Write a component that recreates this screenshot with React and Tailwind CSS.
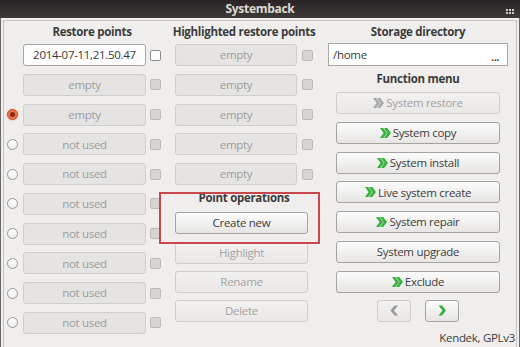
import React from "react";

const FONT = "font-['Open_Sans','DejaVu_Sans',sans-serif] tracking-[-0.3px]";

function Chev({ color = "#35b13d", className = "" }) {
  return (
    <svg width="11" height="10" viewBox="0 0 11 10" className={className}>
      <polygon points="0,0 3.2,0 7,5 3.2,10 0,10 3.6,5" fill={color} />
      <polygon points="4,0 7.2,0 11,5 7.2,10 4,10 7.6,5" fill={color} />
    </svg>
  );
}

function Single({ color, dir }) {
  const pts = dir === "left" ? "8,0 4,5 8,10 4.5,10 0.5,5 4.5,0" : "0.5,0 4.5,5 0.5,10 4,10 8,5 4,0";
  return (
    <svg width="9" height="11" viewBox="0 0 9 10">
      <polygon points={pts} fill={color} />
    </svg>
  );
}

function Field({ text, active = false, w = "w-[123px]" }) {
  return (
    <div
      className={`h-[22px] ${w} rounded-[3px] border flex items-center justify-center text-[11.5px] leading-none ${
        active
          ? "border-[#a9a7a4] bg-[#fdfdfd] text-[#3a3a3a]"
          : "border-[#d0cecb] bg-[#e5e4e2] text-[#9c9c9c]"
      }`}
    >
      {text}
    </div>
  );
}

function Check({ active = false }) {
  return (
    <div
      className={`w-[11px] h-[11px] rounded-[2px] border ${
        active ? "border-[#8e8c89] bg-white" : "border-[#bdbbb8] bg-[#d6d5d3]"
      }`}
    />
  );
}

function Radio({ kind }) {
  if (kind === "none") return <div className="w-[11px] h-[11px]" />;
  if (kind === "on")
    return (
      <div className="w-[11px] h-[11px] rounded-full bg-[#e9744a] border border-[#c4532c] flex items-center justify-center shadow-[0_0_2px_#f0a080]">
        <div className="w-[5px] h-[5px] rounded-full bg-[#8c2a0e]" />
      </div>
    );
  return <div className="w-[11px] h-[11px] rounded-full bg-gradient-to-b from-[#ffffff] to-[#ececec] border border-[#9b9996]" />;
}

function Btn({ children, disabled = false, w = "w-[164px]" }) {
  return (
    <div
      className={`h-[22px] ${w} rounded-[3px] border flex items-center justify-center gap-[2px] text-[11.5px] leading-none ${
        disabled
          ? "border-[#cfcdca] bg-gradient-to-b from-[#f2f1f0] to-[#e9e8e6] text-[#a2a2a2]"
          : "border-[#a6a4a1] bg-gradient-to-b from-[#fcfcfc] to-[#e6e5e3] text-[#3c3c3c]"
      }`}
    >
      {children}
    </div>
  );
}

export default function App() {
  const colA = [
    { r: "none", t: "2014-07-11,21.50.47", a: true },
    { r: "none", t: "empty" },
    { r: "on", t: "empty" },
    { r: "off", t: "not used" },
    { r: "off", t: "not used" },
    { r: "off", t: "not used" },
    { r: "off", t: "not used" },
    { r: "off", t: "not used" },
    { r: "off", t: "not used" },
    { r: "off", t: "not used" },
  ];
  const head = "flex items-center justify-center text-[11.5px] font-bold text-[#3c3c3c] whitespace-nowrap";
  return (
    <div className={`w-[520px] h-[347px] overflow-hidden flex flex-col bg-[#3a3935] ${FONT}`}>
      {/* title bar */}
      <div className="h-[18px] shrink-0 relative flex items-center justify-center bg-gradient-to-b from-[#2a2327] to-[#3d3c38]">
        <span className="text-[12px] font-bold text-[#dedad2] leading-none">Systemback</span>
        <div className="absolute right-[6px] top-[9px] grid grid-cols-3 gap-[1px]">
          {[0, 1, 2, 3, 4, 5].map((i) => (
            <div key={i} className="w-[2px] h-[2px] bg-[#cfcbc3]" />
          ))}
        </div>
      </div>
      {/* body */}
      <div className="flex-1 bg-[#efeeed] border-l border-r border-[#6a6966] pt-[2px] pl-[2px] pr-[2px]">
        <div className="h-full border-l border-t border-r border-[#c6c4c1] pt-[3px] pl-[3px] flex">
          {/* column A */}
          <div className="flex flex-col w-[154px]">
            <div className={`h-[16px] ml-[16px] ${head}`}>Restore points</div>
            <div className="mt-[4px] flex flex-col gap-[7.75px]">
              {colA.map((row, i) => (
                <div key={i} className="flex items-center">
                  <Radio kind={row.r} />
                  <div className="ml-[5px]">
                    <Field text={row.t} active={row.a} />
                  </div>
                  <div className="ml-[4px]">
                    <Check active={row.a} />
                  </div>
                </div>
              ))}
            </div>
          </div>
          {/* column B */}
          <div className="flex flex-col w-[138px] ml-[14px]">
            <div className={`h-[16px] ${head}`}>Highlighted restore points</div>
            <div className="mt-[4px] flex flex-col gap-[7.75px]">
              {[0, 1, 2, 3, 4].map((i) => (
                <div key={i} className="flex items-center">
                  <Field text="empty" w="w-[122px]" />
                  <div className="ml-[5px]">
                    <Check />
                  </div>
                </div>
              ))}
            </div>
            <div className="relative mt-[6px]">
              <div className={`h-[14px] ${head}`}>Point operations</div>
              <div className="mt-[7px]">
                <Btn w="w-[133px]">Create new</Btn>
              </div>
              <div className="absolute top-[1px] -left-[16px] -right-[7px] -bottom-[10px] border-2 border-[#c7474c] pointer-events-none" />
            </div>
            <div className="mt-[8px] flex flex-col gap-[7px]">
              <Btn disabled w="w-[133px]">Highlight</Btn>
              <Btn disabled w="w-[133px]">Rename</Btn>
              <Btn disabled w="w-[133px]">Delete</Btn>
            </div>
          </div>
          {/* column C */}
          <div className="flex flex-col w-[180px] ml-[15px]">
            <div className={`h-[16px] ${head}`}>Storage directory</div>
            <div className="mt-[3px] h-[23px] border border-[#a9a7a4] bg-white flex items-center justify-between pl-[4px] pr-[8px] text-[11.5px] text-[#3a3a3a]">
              <span>/home</span>
              <span className="text-[10px] font-bold leading-none mt-[4px]">...</span>
            </div>
            <div className={`mt-[6px] h-[14px] ${head}`}>Function menu</div>
            <div className="mt-[6px] ml-[8px] flex flex-col gap-[7.75px]">
              <Btn disabled>
                <Chev color="#a9a9a9" /> System restore
              </Btn>
              <Btn>
                <Chev /> System copy
              </Btn>
              <Btn>
                <Chev /> System install
              </Btn>
              <Btn>
                <Chev /> Live system create
              </Btn>
              <Btn>
                <Chev /> System repair
              </Btn>
              <Btn>System upgrade</Btn>
              <Btn>
                <Chev /> Exclude
              </Btn>
            </div>
            <div className="mt-[7px] flex justify-center gap-[14px]">
              <div className="w-[34px] h-[22px] rounded-[3px] border border-[#cfcdca] bg-gradient-to-b from-[#f3f2f1] to-[#e8e7e5] flex items-center justify-center">
                <Single color="#9a9a9a" dir="left" />
              </div>
              <div className="w-[34px] h-[22px] rounded-[3px] border border-[#a6a4a1] bg-gradient-to-b from-[#fcfcfc] to-[#e6e5e3] flex items-center justify-center">
                <Single color="#33b13c" dir="right" />
              </div>
            </div>
            <div className="mt-[9px] -mr-[7px] self-end h-[14px] flex items-center text-[11.5px] text-[#3c3c3c] whitespace-nowrap">
              Kendek, GPLv3
            </div>
          </div>
        </div>
      </div>
    </div>
  );
}
